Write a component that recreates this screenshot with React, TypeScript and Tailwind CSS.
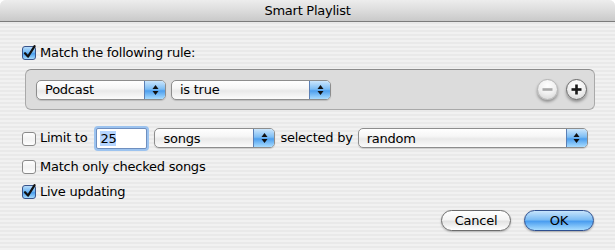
import React from "react";

const font = { fontFamily: '"DejaVu Sans", "Liberation Sans", sans-serif' };

function Check({ checked }: { checked: boolean }) {
  return (
    <svg width="15" height="15" viewBox="0 0 15 15" className="shrink-0 overflow-visible">
      <defs>
        <linearGradient id="cbw" x1="0" y1="0" x2="0" y2="1">
          <stop offset="0" stopColor="#ffffff" />
          <stop offset="0.5" stopColor="#f2f2f2" />
          <stop offset="1" stopColor="#ffffff" />
        </linearGradient>
        <linearGradient id="cbb" x1="0" y1="0" x2="0" y2="1">
          <stop offset="0" stopColor="#bfe0fb" />
          <stop offset="0.45" stopColor="#6fb6f3" />
          <stop offset="0.55" stopColor="#4a9fee" />
          <stop offset="1" stopColor="#aee0ff" />
        </linearGradient>
      </defs>
      <rect x="0.5" y="1.5" width="13" height="13" rx="2.5" fill={checked ? "url(#cbb)" : "url(#cbw)"} stroke={checked ? "#39538a" : "#8a8a8a"} />
      {checked && (
        <path d="M3 8.2 L6 11.6 L12.6 1.2" fill="none" stroke="#111" strokeWidth="2.2" strokeLinecap="round" strokeLinejoin="round" />
      )}
    </svg>
  );
}

function Popup({ label, w }: { label: string; w: string }) {
  return (
    <div className={`${w} h-[20px] flex rounded-[5px] border border-[#8d8d8d] overflow-hidden bg-[linear-gradient(to_bottom,#ffffff_0%,#f6f6f6_40%,#e9e9e9_55%,#fbfbfb_100%)] shadow-[0_1px_1px_rgba(0,0,0,0.15)]`}>
      <div className="flex-1 flex items-center pl-[8px] text-[13px] text-black leading-none">{label}</div>
      <div className="w-[21px] border-l border-[#5a7fb5] flex items-center justify-center bg-[linear-gradient(to_bottom,#cbe6fc_0%,#7dbdf4_45%,#4d9fee_55%,#a9dcff_100%)]">
        <svg width="7" height="12" viewBox="0 0 7 12">
          <path d="M3.5 1 L6.5 5 L0.5 5 Z" fill="#111" />
          <path d="M3.5 11 L6.5 7 L0.5 7 Z" fill="#111" />
        </svg>
      </div>
    </div>
  );
}

function RoundBtn({ kind }: { kind: "minus" | "plus" }) {
  const active = kind === "plus";
  return (
    <div className={`w-[21px] h-[21px] rounded-full flex items-center justify-center border ${active ? "border-[#6a6a6a]" : "border-[#b4b4b4]"} bg-[radial-gradient(circle_at_50%_30%,#ffffff_0%,#f0f0f0_50%,#cfcfcf_100%)] shadow-[0_2px_3px_rgba(0,0,0,0.35)]`}>
      <svg width="11" height="11" viewBox="0 0 11 11">
        <rect x="0.5" y="4.2" width="10" height="2.6" fill={active ? "#1a1a1a" : "#a9a9a9"} />
        {active && <rect x="4.2" y="0.5" width="2.6" height="10" fill="#1a1a1a" />}
      </svg>
    </div>
  );
}

export default function App() {
  return (
    <div style={font} className="w-[615px] h-[250px] overflow-hidden bg-white tracking-[-0.25px]">
      <div className="w-[615px] h-[250px] rounded-t-[6px] overflow-hidden flex flex-col bg-[image:repeating-linear-gradient(to_bottom,#f1f1f1_0px,#f1f1f1_2px,#e9e9e9_2px,#e9e9e9_4px)]">
        <div className="h-[22px] shrink-0 border-b border-[#7c7c7c] flex items-center justify-center text-[13px] text-black bg-[linear-gradient(to_bottom,#ededed_0%,#dcdcdc_50%,#c9c9c9_100%)]">
          Smart Playlist
        </div>

        <div className="mt-[23px] ml-[22px] h-[15px] flex items-center gap-[3px] text-[13px] text-black">
          <Check checked />
          <span>Match the following rule:</span>
        </div>

        <div className="mt-[9px] ml-[25px] w-[570px] h-[41px] shrink-0 rounded-[6px] border border-[#a9a9a9] border-t-[#8c8c8c] bg-[#dcdcdc] flex items-center pl-[10px] pr-[7px]">
          <Popup label="Podcast" w="w-[130px]" />
          <div className="w-[5px]" />
          <Popup label="is true" w="w-[160px]" />
          <div className="flex-1" />
          <RoundBtn kind="minus" />
          <div className="w-[8px]" />
          <RoundBtn kind="plus" />
        </div>

        <div className="mt-[17px] ml-[22px] h-[22px] flex items-center text-[13px] text-black">
          <Check checked={false} />
          <span className="ml-[3px]">Limit to</span>
          <div className="ml-[9px] w-[51px] h-[21px] rounded-[2px] border border-[#6f8fbf] shadow-[0_0_0_2px_#9cc3ef] bg-white flex items-center pl-[3px]">
            <span className="bg-[#b5d5ff] leading-[15px]">25</span>
          </div>
          <div className="ml-[7px]">
            <Popup label="songs" w="w-[121px]" />
          </div>
          <span className="ml-[5px]">selected by</span>
          <div className="ml-[5px]">
            <Popup label="random" w="w-[230px]" />
          </div>
        </div>

        <div className="mt-[10px] ml-[22px] h-[15px] flex items-center gap-[3px] text-[13px] text-black">
          <Check checked={false} />
          <span>Match only checked songs</span>
        </div>

        <div className="mt-[10px] ml-[22px] h-[15px] flex items-center gap-[3px] text-[13px] text-black">
          <Check checked />
          <span>Live updating</span>
        </div>

        <div className="mt-[11px] mr-[21px] flex justify-end gap-[13px]">
          <div className="w-[70px] h-[21px] rounded-full border border-[#6c6c6c] flex items-center justify-center text-[13px] text-black bg-[linear-gradient(to_bottom,#ffffff_0%,#f4f4f4_45%,#e3e3e3_55%,#ffffff_100%)] shadow-[0_1px_2px_rgba(0,0,0,0.25)]">
            Cancel
          </div>
          <div className="w-[70px] h-[21px] rounded-full border border-[#2e4f8f] flex items-center justify-center text-[13px] text-black bg-[linear-gradient(to_bottom,#c6e4fc_0%,#7dbdf4_45%,#4b9ef0_55%,#a8ddff_100%)] shadow-[0_1px_2px_rgba(0,0,0,0.3)]">
            OK
          </div>
        </div>
      </div>
    </div>
  );
}
